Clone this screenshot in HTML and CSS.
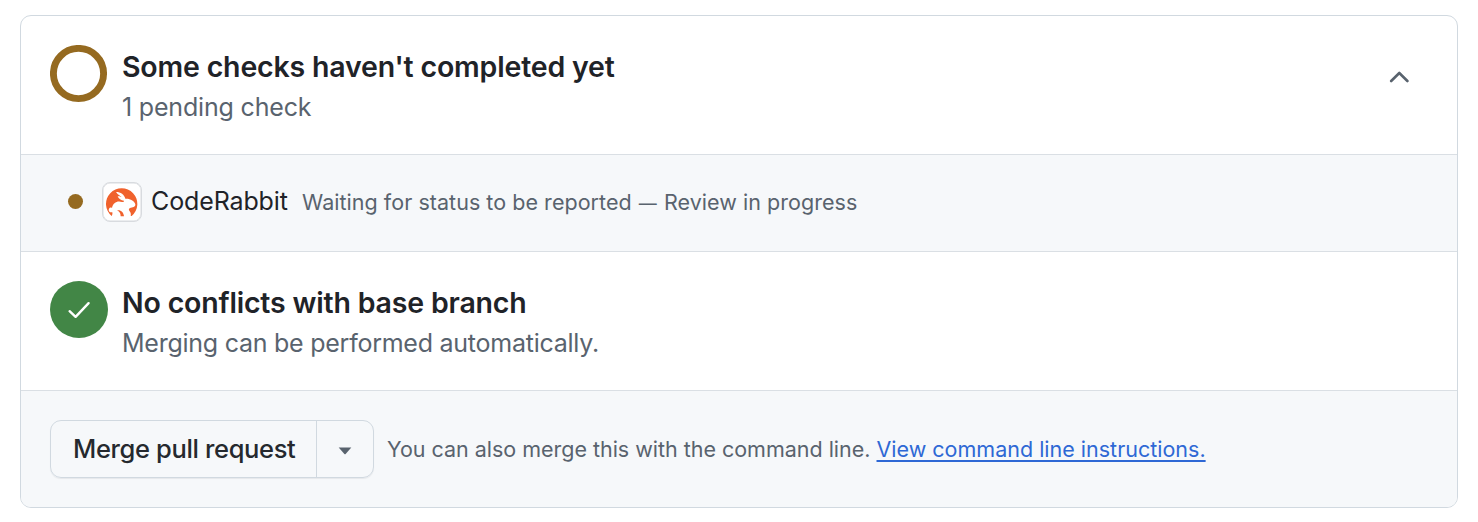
FILE: index.html
```html
<!DOCTYPE html>
<html lang="en">
<head>
<meta charset="utf-8">
<title>Merge status</title>
<link rel="stylesheet" href="styles.css">
</head>
<body>
<main class="merge-box">
  <section class="status">
    <svg class="status-icon" viewBox="0 0 58 58" aria-hidden="true"><circle cx="28.5" cy="28.5" r="25.1" fill="none" stroke="#956a20" stroke-width="6.9"/></svg>
    <div class="status-text">
      <h3 class="title">Some checks haven't completed yet</h3>
      <p class="subtitle subtitle-checks">1 pending check</p>
    </div>
    <svg class="chevron" width="20" height="14" viewBox="0 0 20 14" aria-hidden="true"><path d="M2.2 11 L10.3 3 L18.4 11" fill="none" stroke="#59636e" stroke-width="2.6" stroke-linecap="round" stroke-linejoin="round"/></svg>
  </section>
  <section class="check">
    <span class="dot"></span>
    <span class="avatar">
      <svg width="34" height="34" viewBox="0 0 102 102" aria-hidden="true">
        <path d="M20 93 A47 47 0 1 1 80 93 Z" fill="#f0622d"/>
        <path d="M33 21 C47 21 58 29 61 41 C76 40 89 48 91 58 C92 66 82 68 75 69 C70 71 71 76 75 80 C78 84 78 89 77 95 H19 C22 90 23 86 22 82 C13 83 9 77 12 71 C14 67 18 67 21 69 C24 53 37 46 51 51 C55 52 57 50 57 47 C48 46 41 42 38 34 C43 33 48 35 52 38 C47 33 39 30 33 21 Z" fill="#fff"/>
        <path d="M36 76 C48 74 56 82 57 94 H47 C47 84 43 79 36 76 Z" fill="#f0622d"/>
      </svg>
    </span>
    <span class="check-name">CodeRabbit</span>
    <span class="check-desc">Waiting for status to be reported <span class="dash">—</span> Review in progress</span>
  </section>
  <section class="status">
    <svg class="status-icon" viewBox="0 0 58 58" aria-hidden="true"><ellipse cx="29" cy="28.5" rx="29" ry="28.5" fill="#428646"/><path d="M19.6 30.2 L25.6 35.8 L38.6 22.2" fill="none" stroke="#fff" stroke-width="2.4" stroke-linecap="round" stroke-linejoin="round"/></svg>
    <div class="status-text">
      <h3 class="title">No conflicts with base branch</h3>
      <p class="subtitle">Merging can be performed automatically.</p>
    </div>
  </section>
  <footer class="actions">
    <div class="button-group">
      <button class="merge" type="button"><span>Merge pull request</span></button>
      <button class="options" type="button" aria-label="Merge options"><svg width="14" height="8" viewBox="0 0 14 8" aria-hidden="true"><path d="M.7.4 H13.3 L7.6 6.9 Q7 7.5 6.4 6.9 Z" fill="#59636e"/></svg></button>
    </div>
    <p class="hint"><span class="hint-copy">You can also merge this with the command line.</span><a class="hint-link" href="#">View command line instructions.</a></p>
  </footer>
</main>
</body>
</html>
```
FILE: styles.css
```css
* { box-sizing: border-box; }
body {
  margin: 0;
  padding: 15px 20px 14px;
  background: #fff;
  color: #1f2328;
  font-family: Inter, "Liberation Sans", sans-serif;
}
h3, p { margin: 0; }
.merge-box {
  height: 493px;
  border: 1px solid #d1d9e0;
  border-radius: 11px;
  overflow: hidden;
  display: grid;
  grid-template-rows: 139px 97px 139px 1fr;
  white-space: nowrap;
}
.status {
  display: flex;
  align-items: flex-start;
  padding: 29px 48px 0 29px;
  border-bottom: 1px solid #dadfe4;
}
.status-icon { width: 58px; height: 58px; flex: none; margin-right: 14px; }
.status-text { flex: 1; padding-top: 2px; }
.title { font-size: 28.5px; font-weight: 600; line-height: 40px; letter-spacing: -.18px; }
.subtitle { font-size: 25px; line-height: 40px; color: #59636e; letter-spacing: -.25px; }
.subtitle-checks { letter-spacing: -.18px; }
.chevron { flex: none; margin-top: 25px; }
.check {
  display: flex;
  align-items: center;
  padding: 0 47px 3px;
  background: #f6f8fa;
  border-bottom: 1px solid #dadfe4;
}
.dot { width: 15px; height: 15px; border-radius: 50%; background: #956a20; margin-right: 19px; }
.avatar {
  width: 40px;
  height: 40px;
  border: 1.5px solid #d8dbdf;
  border-radius: 8px;
  background: #fff;
  box-shadow: inset 0 0 0 .5px #d8dbdf;
  display: grid;
  place-items: center;
  margin-right: 9px;
}
.check-name { font-size: 25px; line-height: 36px; width: 151px; letter-spacing: -.12px; padding-bottom: 1px; }
.check-desc { font-size: 21.5px; line-height: 36px; padding-top: 1px; color: #59636e; letter-spacing: .04px; }
.dash { display: inline-block; font-size: 18px; line-height: 1; margin: 0 1px 0 1px; }
.actions {
  display: flex;
  align-items: flex-start;
  padding: 29px;
  background: #f6f8fa;
}
.button-group {
  display: flex;
  width: 324px;
  height: 58px;
  border: 1px solid #d1d9e0;
  border-radius: 11px;
  box-shadow: 0 1px 1px rgba(31, 35, 40, .07);
}
.merge, .options { background: transparent; border: 0; padding: 0; color: #25292e; font-family: inherit; }
.merge { width: 266px; border-right: 1px solid #d1d9e0; font-size: 25.5px; font-weight: 500; letter-spacing: -.36px; padding: 0 0 2px 22px; text-align: left; }
.options { flex: 1; display: grid; place-items: center; padding-top: 3px; }
.hint { display: flex; margin-left: 13px; font-size: 21.5px; line-height: 58px; color: #59636e; }
.hint-copy { width: 489.5px; letter-spacing: -.02px; }
.hint-link { color: #2e68d5; text-decoration: underline; text-decoration-thickness: 2px; text-underline-offset: 3px; text-decoration-skip-ink: none; }
```
